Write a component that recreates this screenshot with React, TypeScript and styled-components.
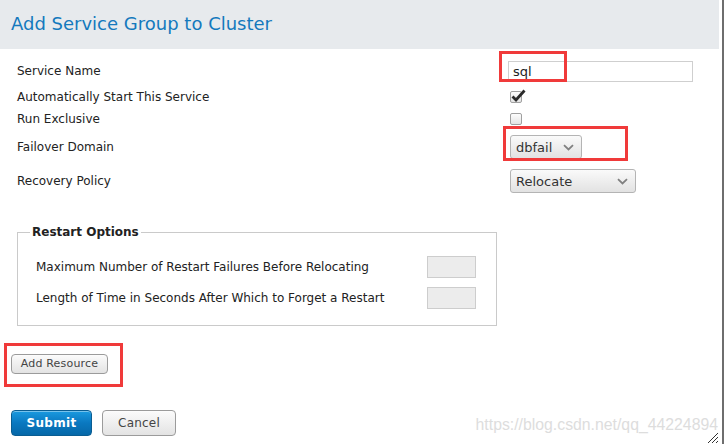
import React from "react";
import styled, { createGlobalStyle } from "styled-components";

const Global = createGlobalStyle`
  html, body { margin: 0; padding: 0; background: #fff; }
  body { font-family: "DejaVu Sans", "Liberation Sans", sans-serif; color: #222; }
  * { box-sizing: border-box; }
`;

const Page = styled.div`
  position: relative;
  width: 728px;
  height: 444px;
  overflow: hidden;
  background: #fff;
`;

const Pane = styled.div`
  width: 724px;
  height: 444px;
  border-right: 2px solid #6e6e6e;
  display: flex;
  flex-direction: column;
`;

const Header = styled.div`
  width: 719px;
  height: 49px;
  background: #e7eaed;
  display: flex;
  align-items: center;
  padding-left: 11px;
  padding-bottom: 3px;
`;

const Title = styled.h1`
  margin: 0;
  font-family: "DejaVu Sans", sans-serif;
  font-weight: normal;
  font-size: 18px;
  color: #1479bd;
`;

const Body = styled.div`
  padding: 10px 0 0 17px;
  display: flex;
  flex-direction: column;
`;

const Row = styled.div<{ $h: number }>`
  display: grid;
  grid-template-columns: 491px auto;
  align-items: center;
  height: ${(p) => p.$h}px;
  overflow: visible;
`;

const Label = styled.span`
  font-size: 12px;
  line-height: 14px;
  color: #222;
`;

const TextInput = styled.div`
  width: 185px;
  height: 21px;
  border: 1px solid #cfcfcf;
  font-size: 13px;
  padding-left: 4px;
  display: flex;
  align-items: center;
  color: #222;
`;

const CheckWrap = styled.div`
  display: flex;
  align-items: center;
  height: 12px;
  padding-left: 2px;
`;

const Check = styled.span`
  position: relative;
  display: block;
  width: 12px;
  height: 12px;
  border: 1px solid #a0a0a0;
  border-radius: 2px;
  background: linear-gradient(#fdfdfd, #e4e4e4);
`;

const CheckMark = styled.svg`
  position: absolute;
  left: 0px;
  top: -3px;
`;

const Select = styled.div<{ $w: number }>`
  width: ${(p) => p.$w}px;
  height: 24px;
  margin-left: 2px;
  border: 1px solid #b4b4b4;
  border-radius: 3px;
  background: linear-gradient(#fafafa, #e2e2e2);
  display: flex;
  align-items: center;
  justify-content: space-between;
  padding: 0 7px 0 5px;
  font-size: 13px;
  color: #333;
`;

const Fieldset = styled.fieldset`
  width: 480px;
  margin: 30px 0 0 0;
  padding: 13px 0 12px 0;
  border: 1px solid #cacaca;
  min-inline-size: auto;
  display: flex;
  flex-direction: column;
  gap: 1px;
`;

const Legend = styled.legend`
  margin-left: 12px;
  padding: 0 2px;
  font-weight: bold;
  font-size: 12px;
  line-height: 14px;
  color: #222;
`;

const OptRow = styled.div`
  display: grid;
  grid-template-columns: 391px auto;
  align-items: center;
  height: 30px;
  padding-left: 18px;
`;

const SmallInput = styled.div`
  width: 49px;
  height: 22px;
  border: 1px solid #cdcdcd;
  background: #ececec;
`;

const Btn = styled.button<{ $primary?: boolean; $w: number; $h: number }>`
  width: ${(p) => p.$w}px;
  height: ${(p) => p.$h}px;
  padding: 0;
  border-radius: 4px;
  font-family: "DejaVu Sans", sans-serif;
  font-size: ${(p) => (p.$primary ? 12 : p.$h < 24 ? 11 : 12)}px;
  font-weight: ${(p) => (p.$primary ? "bold" : "normal")};
  letter-spacing: ${(p) => (p.$primary ? "0.3px" : "0.2px")};
  color: ${(p) => (p.$primary ? "#fff" : "#444")};
  border: 1px solid ${(p) => (p.$primary ? "#0a5d92" : "#9b9b9b")};
  background: ${(p) =>
    p.$primary
      ? "linear-gradient(#1a9ae0, #0a78c0 50%, #0668a8)"
      : "linear-gradient(#fbfbfb, #e3e3e3)"};
  box-shadow: inset 0 1px 0 rgba(255,255,255,0.4);
`;

const AddRow = styled.div`
  margin-top: 26px;
  margin-left: -6px;
`;

const Actions = styled.div`
  margin-top: 36px;
  margin-left: -6px;
  display: flex;
  gap: 10px;
`;

const RedBox = styled.div<{ $x: number; $y: number; $w: number; $h: number }>`
  position: absolute;
  left: ${(p) => p.$x}px;
  top: ${(p) => p.$y}px;
  width: ${(p) => p.$w}px;
  height: ${(p) => p.$h}px;
  border: 3px solid #f03a3a;
  pointer-events: none;
`;

const Watermark = styled.div`
  position: absolute;
  right: 10px;
  top: 416px;
  font-family: "Liberation Sans", Arial, sans-serif;
  font-size: 15.8px;
  color: #dddddd;
`;

const Grip = styled.svg`
  position: absolute;
  left: 706px;
  top: 430px;
`;

const Chevron = () => (
  <svg width="11" height="7" viewBox="0 0 11 7">
    <path d="M1 1.2 L5.5 5.5 L10 1.2" fill="none" stroke="#808080" strokeWidth="1.8" />
  </svg>
);

export default function App() {
  return (
    <Page>
      <Global />
      <Pane>
        <Header>
          <Title>Add Service Group to Cluster</Title>
        </Header>
        <Body>
          <Row $h={24}>
            <Label>Service Name</Label>
            <TextInput>sql</TextInput>
          </Row>
          <Row $h={28}>
            <Label>Automatically Start This Service</Label>
            <CheckWrap>
              <Check>
                <CheckMark width="15" height="13" viewBox="0 0 15 13">
                  <path d="M1.5 7.5 L5 11 L13.5 1.5" fill="none" stroke="#2a2a2a" strokeWidth="2.8" />
                </CheckMark>
              </Check>
            </CheckWrap>
          </Row>
          <Row $h={16}>
            <Label>Run Exclusive</Label>
            <CheckWrap>
              <Check />
            </CheckWrap>
          </Row>
          <Row $h={40}>
            <Label>Failover Domain</Label>
            <Select $w={72}>
              <span>dbfail</span>
              <Chevron />
            </Select>
          </Row>
          <Row $h={28}>
            <Label>Recovery Policy</Label>
            <Select $w={126}>
              <span>Relocate</span>
              <Chevron />
            </Select>
          </Row>
          <Fieldset>
            <Legend>Restart Options</Legend>
            <OptRow>
              <Label>Maximum Number of Restart Failures Before Relocating</Label>
              <SmallInput />
            </OptRow>
            <OptRow>
              <Label>Length of Time in Seconds After Which to Forget a Restart</Label>
              <SmallInput />
            </OptRow>
          </Fieldset>
          <AddRow>
            <Btn $w={97} $h={20}>Add Resource</Btn>
          </AddRow>
          <Actions>
            <Btn $primary $w={81} $h={26}>Submit</Btn>
            <Btn $w={74} $h={26}>Cancel</Btn>
          </Actions>
        </Body>
      </Pane>
      <RedBox $x={499} $y={51} $w={68} $h={31} />
      <RedBox $x={503} $y={126} $w={125} $h={35} />
      <RedBox $x={4} $y={343} $w={119} $h={44} />
      <Watermark>https://blog.csdn.net/qq_44224894</Watermark>
      <Grip width="13" height="14" viewBox="0 0 13 14">
        <path d="M2 13 L12 3 M6 13 L12 7 M10 13 L12 11" stroke="#333" strokeWidth="1" />
      </Grip>
    </Page>
  );
}
